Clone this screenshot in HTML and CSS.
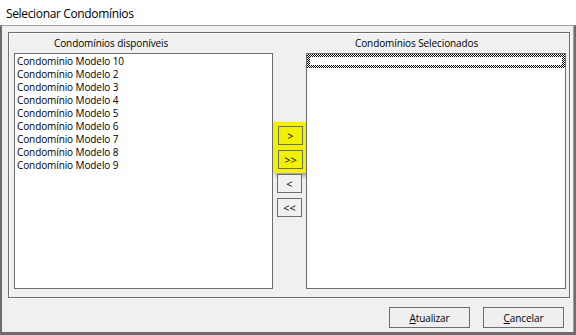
FILE: index.html
```html
<!DOCTYPE html>
<html lang="pt-BR">
<head>
    <meta charset="UTF-8">
    <meta name="viewport" content="width=device-width, initial-scale=1.0">
    <title>Selecionar Condomínios</title>
    <link rel="stylesheet" href="styles.css">
</head>
<body>

    <div class="window">
        <div class="titlebar">Selecionar Condomínios</div>

        <div class="client">
            <div class="group">
                <div class="pane pane-left">
                    <div class="caption">Condomínios disponíveis</div>
                    <ul class="list">
                        <li>Condominio Modelo 10</li>
                        <li>Condomínio Modelo 2</li>
                        <li>Condomínio Modelo 3</li>
                        <li>Condomínio Modelo 4</li>
                        <li>Condomínio Modelo 5</li>
                        <li>Condomínio Modelo 6</li>
                        <li>Condomínio Modelo 7</li>
                        <li>Condomínio Modelo 8</li>
                        <li>Condomínio Modelo 9</li>
                    </ul>
                </div>

                <div class="transfer">
                    <div class="highlight">
                        <button class="arrow">&gt;</button>
                        <button class="arrow">&gt;&gt;</button>
                    </div>
                    <button class="arrow">&lt;</button>
                    <button class="arrow">&lt;&lt;</button>
                </div>

                <div class="pane pane-right">
                    <div class="caption">Condomínios Selecionados</div>
                    <ul class="list">
                        <li class="focus"><span></span></li>
                    </ul>
                </div>
            </div>

            <div class="actions">
                <button class="button"><u>A</u>tualizar</button>
                <button class="button"><u>C</u>ancelar</button>
            </div>
        </div>
    </div>

</body>
</html>
```

FILE: styles.css
```css
body {
    margin: 0;
    background-color: #ffffff;
    font-family: "Open Sans", "Noto Sans", sans-serif;
    font-size: 10px;
    letter-spacing: -0.1px;
    color: #000000;
}
.window {
    width: 576px;
    height: 335px;
    display: flex;
    flex-direction: column;
}
.titlebar {
    height: 23px;
    padding: 2px 0 0 6px;
    line-height: 23px;
    font-size: 12px;
    letter-spacing: -0.35px;
    background-color: #ffffff;
}
.client {
    flex: 1;
    background-color: #f0f0f0;
    border-left: 2px solid #6d6d6d;
    border-right: 2px solid #6d6d6d;
    border-bottom: 3px solid #6d6d6d;
    border-top: 1px solid #a0a0a0;
    box-shadow: inset -1px 0 0 #a0a0a0;
    display: flex;
    flex-direction: column;
}
.group {
    width: 552px;
    height: 264px;
    margin: 6px 0 0 6px;
    padding: 0 3px 0 5px;
    border: 1px solid #6d6d6d;
    box-shadow: inset 1px 1px 0 #ffffff, 1px 1px 0 #ffffff;
    display: flex;
}
.pane {
    display: flex;
    flex-direction: column;
}
.pane-left {
    width: 259px;
}
.pane-right {
    width: 260px;
}
.caption {
    height: 20px;
    line-height: 21px;
}
.pane-left .caption {
    padding-left: 40px;
}
.pane-right .caption {
    padding-left: 49px;
}
.list {
    height: 236px;
    margin: 0;
    padding: 1px 0 0 2px;
    list-style: none;
    background-color: #ffffff;
    border: 1px solid #6d6d6d;
    box-sizing: border-box;
}
.list li {
    height: 13px;
    line-height: 13px;
    white-space: nowrap;
}
.pane-right .list {
    padding: 0;
}
.list li.focus {
    height: 14px;
    padding: 3px;
    box-sizing: border-box;
    background: repeating-conic-gradient(#000000 0 25%, #ffffff 0 50%) 0 0 / 2px 2px;
}
.focus span {
    display: block;
    height: 100%;
    background-color: #ffffff;
}
.transfer {
    width: 33px;
    padding-top: 89px;
    display: flex;
    flex-direction: column;
    align-items: flex-start;
}
.highlight {
    width: 33px;
    height: 51px;
    padding: 4px 0 0 5px;
    box-sizing: border-box;
    background-color: #f2f200;
    box-shadow: 3px 3px 4px rgba(0, 0, 0, 0.35);
    display: flex;
    flex-direction: column;
    gap: 5px;
    margin-bottom: 1px;
}
.arrow {
    width: 25px;
    height: 19px;
    padding: 0;
    margin: 0 0 5px 4px;
    font-family: "Open Sans", "Noto Sans", sans-serif;
    font-size: 11px;
    line-height: 15px;
    color: #000000;
    background-color: #f0f0f0;
    border: 1px solid #6d6d6d;
}
.highlight .arrow {
    margin: 0;
    background-color: transparent;
}
.actions {
    display: flex;
    justify-content: flex-end;
    gap: 13px;
    padding: 9px 10px 0 0;
}
.button {
    width: 81px;
    height: 21px;
    padding: 0;
    font-family: "Open Sans", "Noto Sans", sans-serif;
    font-size: 10px;
    letter-spacing: -0.1px;
    color: #000000;
    background-color: #efefef;
    border: 1px solid #6d6d6d;
}
```
